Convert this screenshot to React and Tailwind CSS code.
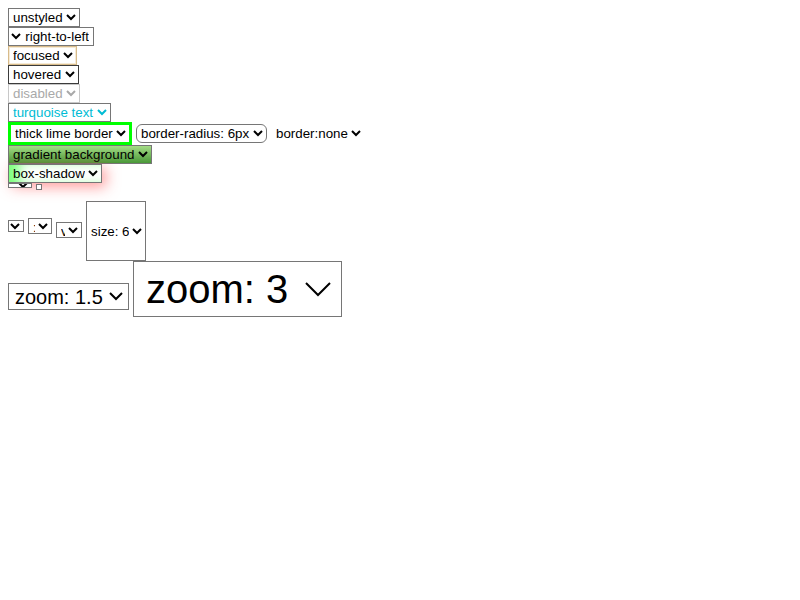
export default function App() {
  const base = "border border-[#767676] bg-white";
  return (
    <div className="flex flex-col items-start p-2 font-['Liberation_Sans',Arial,sans-serif] text-[13.333px] leading-normal text-black">
      <select className={`${base} h-[19px]`}><option>unstyled</option></select>
      <select dir="rtl" className={`${base} h-[19px]`}><option>right-to-left</option></select>
      <select className="h-[19px] border border-[#d8bb8a] bg-white shadow-[inset_0_0_0_1px_#f5ead6]"><option>focused</option></select>
      <select className="h-[19px] border border-[#3b3b3b] bg-white"><option>hovered</option></select>
      <select disabled className="h-[19px] border border-[#c8c8c8] bg-white text-[#a9a9a9]"><option>disabled</option></select>
      <select className={`${base} h-[19px] text-[#00bcd4]`}><option>turquoise text</option></select>
      <div className="flex h-[23px] items-center gap-[4px]">
        <select className="h-[23px] border-[3px] border-[#00ff00] bg-white"><option>thick lime border</option></select>
        <select className={`${base} h-[19px] rounded-[6px]`}><option>border-radius: 6px</option></select>
        <select className="ml-px h-[19px] border-0 bg-white"><option>border:none</option></select>
      </div>
      <select className="h-[19px] border border-[#767676] bg-[linear-gradient(#a4dc86,#4a9838)]"><option>gradient background</option></select>
      <select className={`${base} relative z-0 h-[19px] shadow-[inset_14px_0_12px_-4px_#7dff7d,4px_4px_14px_rgba(255,60,60,0.5)]`}><option>box-shadow</option></select>
      <div className="relative z-10 flex h-[18px] items-start gap-[4px]">
        <select className={`${base} h-[5px] w-[24px]`}><option>x</option></select>
        <select className={`${base} mt-px h-[6px] w-[6px]`}><option>x</option></select>
      </div>
      <div className="flex items-start gap-[4px]">
        <select className={`${base} mt-[19px] h-[12px] w-[16px]`}><option>x</option></select>
        <select className={`${base} mt-[17px] h-[16px] w-[24px]`}><option>:</option></select>
        <select className={`${base} mt-[21px] h-[16px] w-[26px]`}><option>v</option></select>
        <select className={`${base} h-[60px] w-[60px]`}><option>size: 6</option></select>
      </div>
      <div className="flex items-end gap-[4px]">
        <select className="mb-[4.67px] h-[18px] w-[80.67px] border-[0.67px] border-[#767676] bg-white [zoom:1.5]"><option>zoom: 1.5</option></select>
        <select className="h-[18.67px] w-[69.67px] border-[0.34px] border-[#767676] bg-white [zoom:3]"><option>zoom: 3</option></select>
      </div>
    </div>
  );
}
